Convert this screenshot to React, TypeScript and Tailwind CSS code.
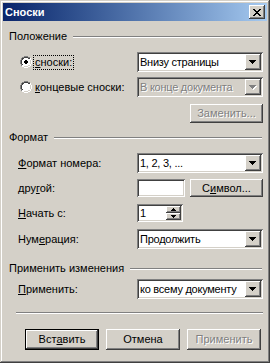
import React from "react";

const raised =
  "shadow-[inset_-1px_-1px_#404040,inset_1px_1px_#ffffff,inset_-2px_-2px_#808080,inset_2px_2px_#d4d0c8]";
const sunken =
  "shadow-[inset_1px_1px_#808080,inset_-1px_-1px_#ffffff,inset_2px_2px_#404040,inset_-2px_-2px_#d4d0c8]";

function U({ children }: { children: React.ReactNode }) {
  return <span className="underline underline-offset-[1px] decoration-1">{children}</span>;
}

function Arrow({ disabled }: { disabled?: boolean }) {
  return (
    <svg width="8" height="5" viewBox="0 0 8 5">
      {disabled && <path d="M1 1h7v1h-1v1h-1v1h-1v1h-1z" fill="#ffffff" />}
      <path d="M0 0h7v1h-1v1h-1v1h-1v1h-1v-1h-1v-1h-1v-1h-1z" fill={disabled ? "#808080" : "#000000"} />
    </svg>
  );
}

function Combo({ text, disabled }: { text: string; disabled?: boolean }) {
  return (
    <div
      className={`relative flex h-[20px] w-[126px] items-center p-[2px] ${sunken} ${
        disabled ? "bg-[#d4d0c8]" : "bg-white"
      }`}
    >
      <span
        className={`flex-1 pl-[1px] whitespace-nowrap overflow-hidden tracking-[-0.25px] ${
          disabled ? "text-[#808080] [text-shadow:1px_1px_#ffffff]" : "text-black"
        }`}
      >
        {text}
      </span>
      <div className={`flex h-[16px] w-[16px] shrink-0 items-center justify-center bg-[#d4d0c8] ${raised}`}>
        <Arrow disabled={disabled} />
      </div>
    </div>
  );
}

function Radio({ checked }: { checked?: boolean }) {
  return (
    <svg width="12" height="12" viewBox="0 0 12 12" className="shrink-0">
      <path d="M4 0h4v1h2v1h1v2h1v4h-1v2h-1v1h-2v1h-4v-1h-2v-1h-1v-2h-1v-4h1v-2h1v-1h2z" fill="#ffffff" />
      <path d="M4 0h4v1h2v1h-2v-1h-4v1h-2v2h-1v4h1v2h-1v-2h-1v-4h1v-2h1v-1h2z" fill="#808080" />
      <path d="M4 1h4v1h2v1h-2v-1h-4v1h-1v1h-1v4h1v1h-1v-1h-1v-4h1v-2h2z" fill="#404040" />
      <path d="M10 2h1v2h1v4h-1v2h-1v1h-2v1h-4v-1h-2v-1h2v1h4v-1h2v-2h1v-4h-1z" fill="#ffffff" />
      <path d="M10 3h0v1h1v4h-1v2h-2v1h-4v-1h4v-1h2v-2h0v-4z" fill="#d4d0c8" />
      {checked && <path d="M5 4h2v1h1v2h-1v1h-2v-1h-1v-2h1z" fill="#000000" />}
    </svg>
  );
}

function Heading({ text }: { text: string }) {
  return (
    <div className="flex h-[13px] items-center">
      <span className="whitespace-nowrap leading-[13px]">{text}</span>
      <div className="ml-[6px] mr-[5px] h-[2px] flex-1 border-t border-b border-t-[#808080] border-b-white" />
    </div>
  );
}

function Btn({
  children,
  disabled,
  def,
}: {
  children: React.ReactNode;
  disabled?: boolean;
  def?: boolean;
}) {
  return (
    <div
      className={`flex h-full items-center justify-center bg-[#d4d0c8] ${
        def
          ? "shadow-[inset_0_0_0_1px_#000000,inset_-2px_-2px_#404040,inset_2px_2px_#ffffff,inset_-3px_-3px_#808080]"
          : raised
      } ${disabled ? "text-[#808080] [text-shadow:1px_1px_#ffffff]" : "text-black"}`}
    >
      {children}
    </div>
  );
}

export default function App() {
  return (
    <div
      className="relative h-[363px] w-[270px] bg-[#d4d0c8] p-[3px] text-[11px] leading-[13px] text-black shadow-[inset_-1px_-1px_#404040,inset_1px_1px_#d4d0c8,inset_-2px_-2px_#808080,inset_2px_2px_#ffffff]"
      style={{ fontFamily: '"Liberation Sans", Arial, sans-serif' }}
    >
      {/* title bar */}
      <div className="flex h-[18px] items-center justify-between bg-gradient-to-r from-[#0a246a] to-[#a6caf0] pl-[2px] pr-[2px]">
        <span className="font-bold text-white text-[11px]">Сноски</span>
        <div className={`flex h-[14px] w-[16px] items-center justify-center bg-[#d4d0c8] ${raised}`}>
          <svg width="8" height="7" viewBox="0 0 8 7">
            <path
              d="M0 0h2v1h1v1h2v-1h1v-1h2v1h-1v1h-1v1h-1v1h1v1h1v1h1v1h-2v-1h-1v-1h-2v1h-1v1h-2v-1h1v-1h1v-1h1v-1h-1v-1h-1v-1h-1z"
              fill="#000"
            />
          </svg>
        </div>
      </div>

      {/* body */}
      <div className="flex flex-col pl-[6px]">
        <div className="mt-[9px]">
          <Heading text="Положение" />
        </div>

        <div className="mt-[9px] flex h-[20px] items-center">
          <div className="ml-[11px] flex w-[117px] items-center">
            <Radio checked />
            <span className="ml-[1px] border border-dotted border-black px-[1px] leading-[13px]">
              <U>с</U>носки:
            </span>
          </div>
          <Combo text="Внизу страницы" />
        </div>

        <div className="mt-[5px] flex h-[20px] items-center">
          <div className="ml-[11px] flex w-[117px] items-center">
            <Radio />
            <span className="ml-[2px] px-[1px] whitespace-nowrap">
              <U>к</U>онцевые сноски:
            </span>
          </div>
          <Combo text="В конце документа" disabled />
        </div>

        <div className="mt-[7px] flex justify-end pr-[4px]">
          <div className="h-[19px] w-[73px]">
            <Btn disabled>Заменить...</Btn>
          </div>
        </div>

        <div className="mt-[8px]">
          <Heading text="Формат" />
        </div>

        <div className="mt-[9px] flex h-[20px] items-center">
          <span className="ml-[9px] w-[119px]">
            <U>Ф</U>ормат номера:
          </span>
          <Combo text="1, 2, 3, ..." />
        </div>

        <div className="mt-[6px] flex h-[18px] items-center">
          <span className="ml-[9px] w-[119px]">
            дру<U>г</U>ой:
          </span>
          <div className={`h-[18px] w-[48px] bg-white ${sunken}`} />
          <div className="ml-[5px] h-[18px] w-[73px]">
            <Btn>
              С<U>и</U>мвол...
            </Btn>
          </div>
        </div>

        <div className="mt-[7px] flex h-[18px] items-center">
          <span className="ml-[9px] w-[119px]">
            <U>Н</U>ачать с:
          </span>
          <div className={`flex h-[18px] w-[46px] items-stretch bg-white p-[2px] ${sunken}`}>
            <span className="flex-1 pl-[1px] leading-[14px]">1</span>
            <div className="flex w-[15px] flex-col">
              <div className={`flex h-[7px] items-center justify-center bg-[#d4d0c8] ${raised}`}>
                <svg width="5" height="3" viewBox="0 0 5 3">
                  <path d="M2 0h1v1h1v1h1v1h-5v-1h1v-1h1z" fill="#000" />
                </svg>
              </div>
              <div className={`flex h-[7px] items-center justify-center bg-[#d4d0c8] ${raised}`}>
                <svg width="5" height="3" viewBox="0 0 5 3">
                  <path d="M0 0h5v1h-1v1h-1v1h-1v-1h-1v-1h-1z" fill="#000" />
                </svg>
              </div>
            </div>
          </div>
        </div>

        <div className="mt-[7px] flex h-[20px] items-center">
          <span className="ml-[9px] w-[119px]">
            Нум<U>е</U>рация:
          </span>
          <Combo text="Продолжить" />
        </div>

        <div className="mt-[13px]">
          <Heading text="Применить изменения" />
        </div>

        <div className="mt-[4px] flex h-[20px] items-center">
          <span className="ml-[9px] w-[119px]">
            <U>П</U>рименить:
          </span>
          <Combo text="ко всему документу" />
        </div>

        <div className="ml-[7px] mr-[4px] mt-[13px] h-[2px] border-t border-b border-t-[#808080] border-b-white" />

        <div className="mt-[15px] ml-[16px] flex gap-[7px]">
          <div className="h-[21px] w-[74px]">
            <Btn def>
              Вст<U>а</U>вить
            </Btn>
          </div>
          <div className="h-[21px] w-[74px]">
            <Btn>Отмена</Btn>
          </div>
          <div className="h-[21px] w-[74px]">
            <Btn disabled>Применить</Btn>
          </div>
        </div>
      </div>
    </div>
  );
}
